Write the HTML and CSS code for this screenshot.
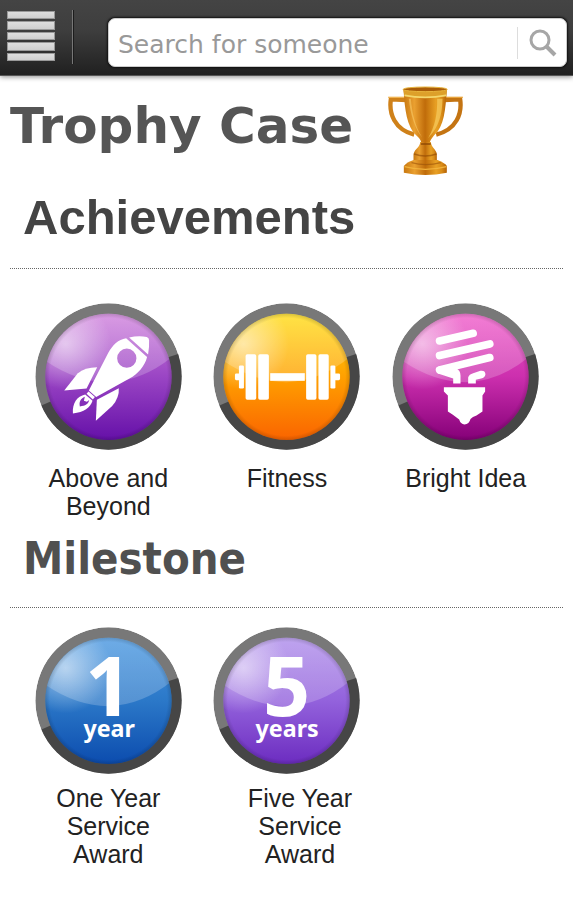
FILE: index.html
```html
<!DOCTYPE html>
<html lang="en">

<head>
    <meta charset="UTF-8">
    <meta name="viewport" content="width=device-width, initial-scale=1.0">
    <link rel="stylesheet" href="styles.css">
    <title>Trophy Case</title>
</head>

<body>
    <!-- shared gradients and badge frame -->
    <svg class="defs" width="0" height="0" aria-hidden="true">
        <defs>
            <linearGradient id="purple" x1="0" y1="0" x2="0" y2="1">
                <stop offset="0" stop-color="#cf7fdc" />
                <stop offset="0.5" stop-color="#9a45c4" />
                <stop offset="1" stop-color="#6510a8" />
            </linearGradient>
            <linearGradient id="orange" x1="0" y1="0" x2="0" y2="1">
                <stop offset="0" stop-color="#ffdc10" />
                <stop offset="0.5" stop-color="#ffa000" />
                <stop offset="1" stop-color="#fa6400" />
            </linearGradient>
            <linearGradient id="pink" x1="0" y1="0" x2="0" y2="1">
                <stop offset="0" stop-color="#f058c8" />
                <stop offset="0.5" stop-color="#cc2fae" />
                <stop offset="1" stop-color="#850078" />
            </linearGradient>
            <linearGradient id="blue" x1="0" y1="0" x2="0" y2="1">
                <stop offset="0" stop-color="#4595e0" />
                <stop offset="0.5" stop-color="#2b78c8" />
                <stop offset="1" stop-color="#0c4cae" />
            </linearGradient>
            <linearGradient id="violet" x1="0" y1="0" x2="0" y2="1">
                <stop offset="0" stop-color="#ac8aea" />
                <stop offset="0.5" stop-color="#9362dc" />
                <stop offset="1" stop-color="#6c2cc0" />
            </linearGradient>
            <linearGradient id="gloss" x1="0" y1="0" x2="0" y2="1">
                <stop offset="0" stop-color="#fff" stop-opacity="0.22" />
                <stop offset="1" stop-color="#fff" stop-opacity="0.2" />
            </linearGradient>
            <radialGradient id="shine" cx="0.16" cy="0.24" r="0.36">
                <stop offset="0" stop-color="#fff" stop-opacity="0.55" />
                <stop offset="1" stop-color="#fff" stop-opacity="0" />
            </radialGradient>
            <radialGradient id="edge" cx="0.5" cy="0.5" r="0.5">
                <stop offset="0.93" stop-color="#000" stop-opacity="0" />
                <stop offset="1" stop-color="#000" stop-opacity="0.15" />
            </radialGradient>
            <linearGradient id="gold" x1="0" y1="0" x2="1" y2="0">
                <stop offset="0" stop-color="#c87810" />
                <stop offset="0.25" stop-color="#eaa030" />
                <stop offset="0.5" stop-color="#c06c0a" />
                <stop offset="0.75" stop-color="#e8a024" />
                <stop offset="0.88" stop-color="#d98c18" />
                <stop offset="1" stop-color="#b46206" />
            </linearGradient>
            <clipPath id="outer">
                <circle cx="241" cy="241" r="220" />
            </clipPath>
            <clipPath id="inner">
                <circle cx="241" cy="242" r="190" />
            </clipPath>
            <g id="ring" clip-path="url(#outer)">
                <circle cx="241" cy="241" r="220" fill="#787878" />
                <path d="M10 341L241 241L470 167L470 470L10 470Z" fill="#464646" />
            </g>
            <g id="glass" clip-path="url(#inner)">
                <circle cx="241" cy="242" r="190" fill="url(#shine)" />
                <path d="M40 186Q140 258 241 258Q345 256 440 176L440 40L40 40Z" fill="url(#gloss)" />
                <circle cx="241" cy="242" r="190" fill="url(#edge)" />
            </g>
        </defs>
    </svg>

    <header class="topbar">
        <button class="menu" type="button" aria-label="Menu">
            <span class="menu-bar"></span>
            <span class="menu-bar"></span>
            <span class="menu-bar"></span>
            <span class="menu-bar"></span>
            <span class="menu-bar"></span>
        </button>
        <form class="search">
            <input class="search-input" type="text" aria-label="Search for someone" placeholder="Search for someone">
            <button class="search-button" type="submit" aria-label="Search">
                <svg width="28" height="28" viewBox="0 0 28 28">
                    <circle cx="11" cy="11" r="9" fill="none" stroke="#a6a6a6" stroke-width="3" />
                    <path d="M17 17L26 26" stroke="#a6a6a6" stroke-width="4" />
                </svg>
            </button>
        </form>
    </header>

    <main>
        <div class="title-row">
            <h1 class="title">Trophy Case</h1>
            <svg class="trophy" viewBox="75 28 230 270" aria-hidden="true">
                <path d="M134 70L86 68C80 110 96 158 156 174" fill="none" stroke="#cf8119" stroke-width="13" />
                <path d="M246 70L294 68C300 110 284 158 222 174" fill="none" stroke="#c47412" stroke-width="13" />
                <path d="M78 62L132 62" stroke="#f0b452" stroke-width="4" />
                <path d="M248 62L302 62" stroke="#e8a43c" stroke-width="4" />
                <path d="M124 38L254 38C250 100 246 150 216 176C204 190 202 198 202 204L178 204C178 196 176 188 162 176C134 150 128 100 124 38Z" fill="url(#gold)" />
                <path d="M225 66C226 112 218 150 198 184C232 150 240 110 241 66Z" fill="#f5c95c" opacity="0.75" />
                <path d="M146 66C150 110 158 146 180 182C160 160 144 112 140 66Z" fill="#f9c968" opacity="0.6" />
                <path d="M123 38L255 38L252 58Q188 70 127 58Z" fill="#dda02a" />
                <path d="M127 56Q188 68 252 56" fill="none" stroke="#f4d76c" stroke-width="5" />
                <ellipse cx="189" cy="38" rx="66" ry="7" fill="#a95c08" stroke="#e8b43c" stroke-width="3" />
                <path d="M174 196L206 196C207 212 222 218 224 232L224 252L154 252L154 232C158 216 174 212 174 196Z" fill="url(#gold)" />
                <path d="M156 232Q189 244 223 232" fill="none" stroke="#8e4804" stroke-width="4" opacity="0.6" />
                <path d="M176 202L206 202" stroke="#8e4804" stroke-width="6" opacity="0.7" />
                <path d="M154 250L226 250Q250 260 254 268L254 288Q190 302 125 288L125 268Q134 256 154 250Z" fill="url(#gold)" />
                <path d="M127 270Q190 286 253 270" fill="none" stroke="#f2b33c" stroke-width="4" />
                <path d="M148 258Q190 270 236 258" fill="none" stroke="#9a5208" stroke-width="4" opacity="0.6" />
            </svg>
        </div>

        <section class="achievements">
            <h2 class="heading">Achievements</h2>
            <hr class="rule">
            <div class="badges">
                <figure class="item">
                    <svg class="badge" viewBox="20 20 442 442" aria-hidden="true">
                        <use href="#ring" />
                        <circle cx="241" cy="242" r="190" fill="url(#purple)" />
                        <use href="#glass" />
                        <g fill="#fff">
                            <path fill-rule="evenodd" d="M294 126L357 182C350 210 330 232 304 247L204 303L182 283L240 170C254 146 270 130 294 126ZM296 157A29 29 0 1 0 296 215A29 29 0 1 0 296 157Z" />
                            <path d="M303 124Q330 117 356 122Q363 124 363 132Q364 154 360 175Z" />
                            <path d="M207 213L175 277L108 283L148 232Q170 213 207 213Z" />
                            <path d="M272 276L206 311L203 374L252 330Q274 304 272 276Z" />
                            <path d="M181 286L200 303L194 310L175 293Z" />
                            <path fill-rule="evenodd" d="M171 295L193 314C186 336 168 348 134 352C132 322 146 300 171 295ZM170 302C156 308 152 318 155 331C172 330 180 324 183 312L176 317L167 314Z" />
                        </g>
                    </svg>
                    <figcaption class="caption">Above and Beyond</figcaption>
                </figure>
                <figure class="item">
                    <svg class="badge" viewBox="20 20 442 442" aria-hidden="true">
                        <use href="#ring" />
                        <circle cx="241" cy="242" r="190" fill="url(#orange)" />
                        <use href="#glass" />
                        <g fill="#fff">
                            <rect x="118" y="174" width="32" height="137" rx="5" />
                            <rect x="156" y="174" width="32" height="137" rx="5" />
                            <rect x="300" y="174" width="31" height="137" rx="5" />
                            <rect x="337" y="174" width="31" height="137" rx="5" />
                            <rect x="98" y="208" width="15" height="69" rx="4" />
                            <rect x="373" y="208" width="15" height="69" rx="4" />
                            <rect x="86" y="232" width="16" height="20" rx="4" />
                            <rect x="384" y="232" width="18" height="20" rx="4" />
                            <rect x="192" y="231" width="104" height="23" />
                        </g>
                    </svg>
                    <figcaption class="caption">Fitness</figcaption>
                </figure>
                <figure class="item">
                    <svg class="badge" viewBox="20 20 442 442" aria-hidden="true">
                        <use href="#ring" />
                        <circle cx="241" cy="242" r="190" fill="url(#pink)" />
                        <use href="#glass" />
                        <g fill="none" stroke="#fff" stroke-width="23" stroke-linecap="round">
                            <path d="M163 134L264 111" />
                            <path d="M163 178L314 143" />
                            <path d="M163 221L314 184" />
                        </g>
                        <path d="M160 210L212 216Q226 222 226 238L226 262L204 262L204 247L158 232Z" fill="#fff" />
                        <path d="M249 262L249 244Q252 234 264 231L286 224Q300 222 301 234Q300 244 288 247L272 251L272 262Z" fill="#fff" />
                        <path d="M176 273L300 273L300 286L292 298L292 346L274 358Q262 362 256 369Q252 385 238 385Q226 384 222 370L203 356L188 346L188 298L176 286Z" fill="#fff" />
                    </svg>
                    <figcaption class="caption">Bright Idea</figcaption>
                </figure>
            </div>
        </section>

        <section class="milestones">
            <h2 class="heading">Milestone</h2>
            <hr class="rule">
            <div class="badges">
                <figure class="item">
                    <svg class="badge" viewBox="20 20 442 442">
                        <use href="#ring" />
                        <circle cx="241" cy="242" r="190" fill="url(#blue)" />
                        <use href="#glass" />
                        <text class="number" x="241" y="287">1</text>
                        <text class="unit" x="243" y="350">year</text>
                    </svg>
                    <figcaption class="caption">One Year<br>Service<br>Award</figcaption>
                </figure>
                <figure class="item item-wide">
                    <svg class="badge" viewBox="20 20 442 442">
                        <use href="#ring" />
                        <circle cx="241" cy="242" r="190" fill="url(#violet)" />
                        <use href="#glass" />
                        <text class="number" x="241" y="287">5</text>
                        <text class="unit" x="243" y="350">years</text>
                    </svg>
                    <figcaption class="caption">Five Year<br>Service<br>Award</figcaption>
                </figure>
            </div>
        </section>
    </main>
</body>

</html>
```
FILE: styles.css
```css
body {
  margin: 0;
  background: #fff;
  font-family: "Liberation Sans", Arial, sans-serif;
}

.defs {
  position: absolute;
}

.topbar {
  display: flex;
  box-sizing: border-box;
  height: 76px;
  padding: 10px 6px 9px 7px;
  background: linear-gradient(#444, #3e3e3e 40%, #202020);
  border-bottom: 1px solid #555;
  box-shadow: 0 1px 5px rgba(0, 0, 0, 0.45);
}

.menu {
  display: flex;
  flex-direction: column;
  gap: 2px;
  box-sizing: border-box;
  width: 66px;
  height: 54px;
  margin-right: 35px;
  padding: 1px 17px 3px 0;
  background: none;
  border: 0;
  border-right: 1px solid #777;
  box-shadow: 1px 0 0 #1c1c1c;
}

.menu-bar {
  flex: 1;
  background: linear-gradient(#dedede, #cfcfcf);
  border: 1px solid #999;
}

.search {
  display: flex;
  flex: 1;
  align-items: center;
  box-sizing: border-box;
  height: 49px;
  margin-top: 8px;
  background: #fff;
  border: 1px solid #ccc;
  border-radius: 7px;
  box-shadow: 0 0 2px 1px #111;
}

.search-input {
  flex: 1;
  min-width: 0;
  padding: 3px 9px 0;
  background: none;
  border: 0;
  color: #555;
  font-family: "DejaVu Sans", Verdana, sans-serif;
  font-size: 25px;
}

.search-input::placeholder {
  color: #999;
  opacity: 1;
}

.search-button {
  display: flex;
  align-items: center;
  height: 32px;
  padding: 0 9px 0 11px;
  background: none;
  border: 0;
  border-left: 1px solid #ddd;
}

.title-row {
  display: flex;
  gap: 34px;
  padding: 10px 10px 0;
}

.title {
  margin: 0;
  color: #555;
  font-family: "DejaVu Sans", Verdana, sans-serif;
  font-size: 50px;
  line-height: 80px;
}

.trophy {
  width: 77px;
  height: 90px;
}

.heading {
  margin: 13px 23px 23px;
  color: #444;
  font-size: 49px;
  line-height: 56px;
}

.milestones .heading {
  margin-top: 11px;
  margin-bottom: 20px;
  color: #505050;
  font-family: "DejaVu Sans Condensed", "DejaVu Sans", sans-serif;
  font-size: 45px;
}

.rule {
  margin: 0 10px;
  border: 0;
  border-top: 1px dotted #666;
}

.badges {
  display: grid;
  grid-template-columns: repeat(3, 1fr);
  padding: 34px 18px 0 19px;
}

.milestones .badges {
  padding-top: 19px;
}

.item {
  margin: 0;
  text-align: center;
}

.badge {
  display: block;
  width: 147px;
  height: 147px;
  margin: 0 auto;
}

.number,
.unit {
  fill: #fff;
  font-family: "Noto Sans", "Open Sans", sans-serif;
  font-weight: bold;
  text-anchor: middle;
}

.number {
  font-size: 248px;
}

.unit {
  font-size: 70px;
}

.caption {
  padding: 14px 16px 0;
  color: #222;
  font-size: 25px;
  line-height: 28px;
}

.milestones .caption {
  padding-top: 10px;
}

.item-wide .caption {
  padding-left: 42px;
}
```
